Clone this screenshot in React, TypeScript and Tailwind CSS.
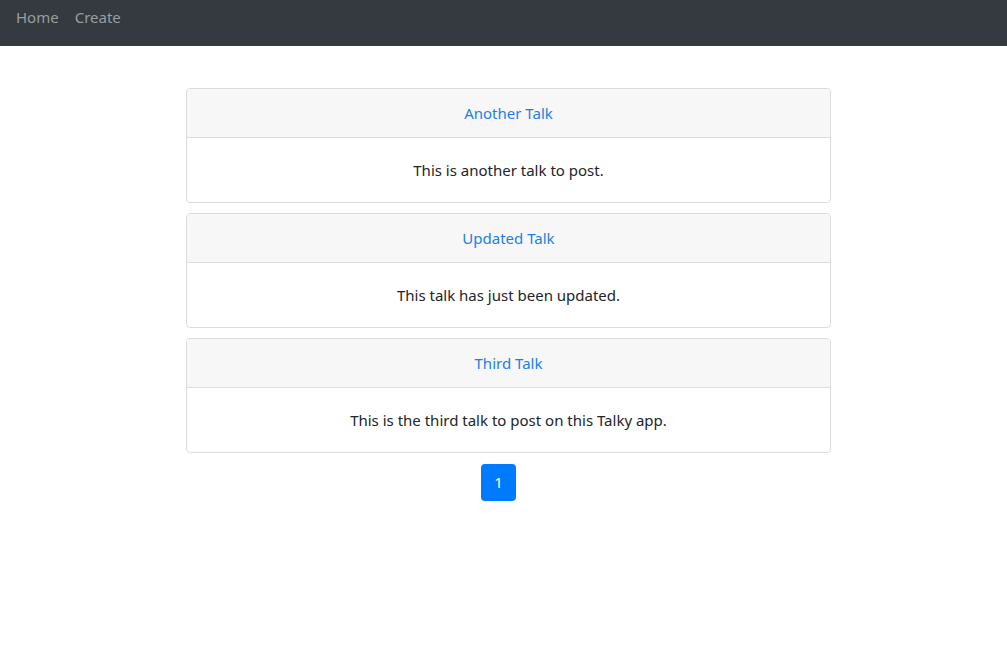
const talks = [
  { title: "Another Talk", body: "This is another talk to post." },
  { title: "Updated Talk", body: "This talk has just been updated." },
  { title: "Third Talk", body: "This is the third talk to post on this Talky app." },
];

export default function App() {
  return (
    <div className="min-h-screen bg-white text-[#212529]" style={{ fontFamily: '"Noto Sans", sans-serif' }}>
      <nav className="h-[46px] bg-[#343a40] flex items-start pt-[5px] px-4 gap-[16px] text-[15px]">
        <a className="text-[#9a9da0] leading-6">Home</a>
        <a className="text-[#9a9da0] leading-6">Create</a>
      </nav>

      <div className="w-[645px] ml-[186px] mt-[42px] flex flex-col gap-[10px]">
        {talks.map((talk) => (
          <div key={talk.title} className="border border-[#dcdcdc] rounded-[4px] overflow-hidden">
            <div className="h-[49px] pt-[1px] bg-[#f7f7f7] border-b border-[#dcdcdc] flex items-center justify-center">
              <a className="text-[#1a7fe8] text-[15px]">{talk.title}</a>
            </div>
            <div className="h-[64px] pt-[1px] flex items-center justify-center text-[15px]">
              {talk.body}
            </div>
          </div>
        ))}
      </div>

      <div className="ml-[481px] mt-[11px]">
        <button className="w-[35px] h-[37px] rounded-[4px] bg-[#007bff] text-white text-[15px]">1</button>
      </div>
    </div>
  );
}
